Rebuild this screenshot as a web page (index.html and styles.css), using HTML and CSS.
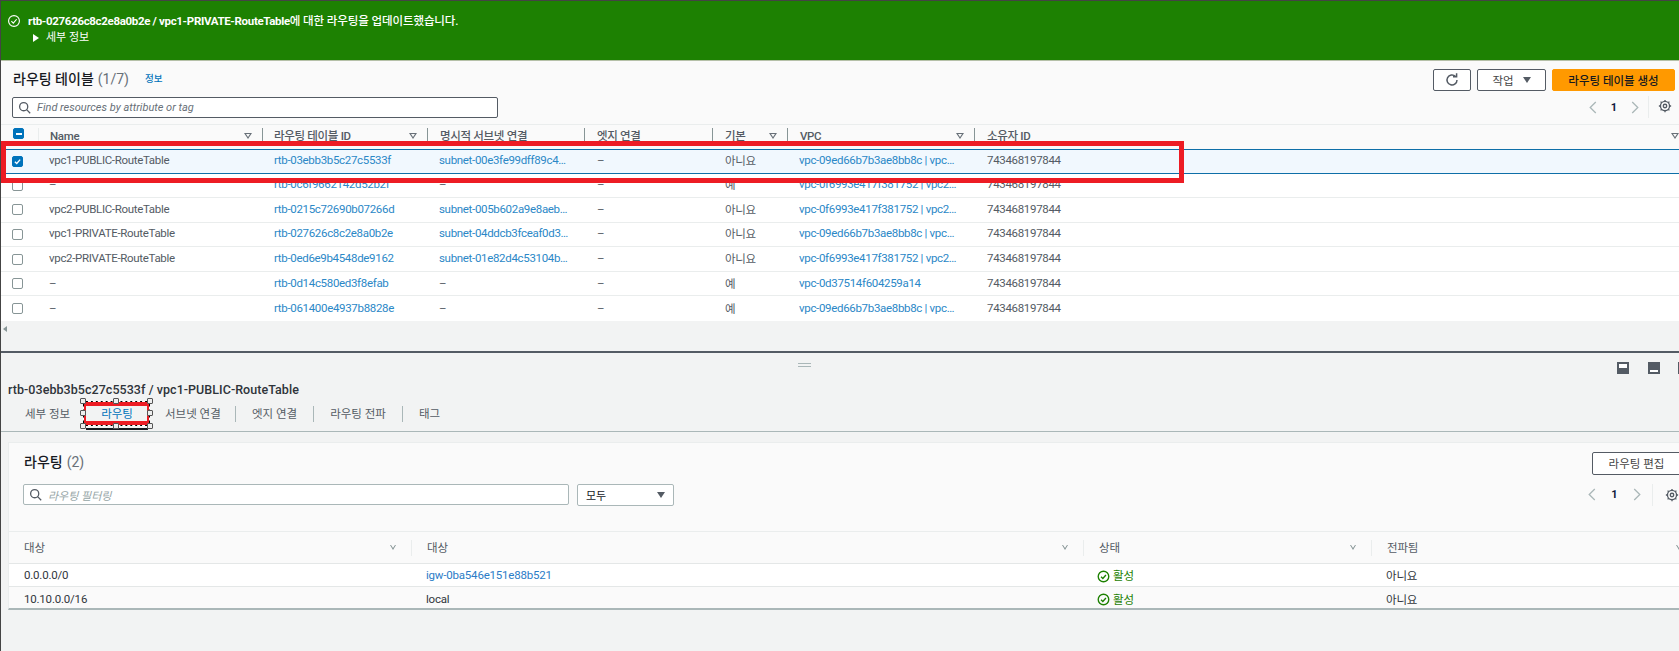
FILE: index.html
```html
<!DOCTYPE html>
<html lang="ko">
<head>
<meta charset="utf-8">
<title>라우팅 테이블</title>
<link rel="stylesheet" href="styles.css">
</head>
<body>
<div class="page">
  <div class="banner">
    <svg class="banner-ico" viewBox="0 0 16 16"><circle cx="8" cy="8" r="6.2"/><path d="M5 8.2l2.2 2.2L11 6"/></svg>
    <div>
      <div class="banner-msg"><b>rtb-027626c8c2e8a0b2e / vpc1-PRIVATE-RouteTable</b>에 대한 라우팅을 업데이트했습니다.</div>
      <div class="banner-more"><span class="tri"></span>세부 정보</div>
    </div>
  </div>

  <section class="top">
    <div class="top-head">
      <div class="title"><span>라우팅 테이블</span> <span class="count">(1/7)</span><a class="info">정보</a></div>
      <div class="actions">
        <button class="btn btn-ico"><svg viewBox="0 0 16 16"><path d="M13 8a5 5 0 1 1-1.6-3.7"/><path d="M12.6 1.2v3.6H9"/></svg></button>
        <button class="btn btn-act">작업<span class="caret"></span></button>
        <button class="btn btn-primary">라우팅 테이블 생성</button>
      </div>
    </div>
    <div class="tools">
      <div class="search s1"><svg class="mag" viewBox="0 0 16 16"><circle cx="7" cy="7" r="5"/><path d="M10.6 10.6L15 15"/></svg><i>Find resources by attribute or tag</i></div>
      <div class="pager">
        <svg class="chev" viewBox="0 0 8 14"><path d="M7 1L1 7l6 6"/></svg><b>1</b><svg class="chev" viewBox="0 0 8 14"><path d="M1 1l6 6-6 6"/></svg><span class="vsep"></span>
        <svg class="gear" viewBox="0 0 16 16"><circle cx="8" cy="8" r="2"/><circle cx="8" cy="8" r="5.2"/><path d="M8 1v1.6M8 13.4V15M1 8h1.6M13.4 8H15M3 3l1.2 1.2M11.8 11.8L13 13M13 3l-1.2 1.2M4.2 11.8L3 13"/></svg>
      </div>
    </div>
    <div class="tbl">
      <div class="row head">
        <div class="c"><span class="cb minus"></span></div>
        <div class="c">Name<span class="sort"></span></div>
        <div class="c">라우팅 테이블 ID<span class="sort"></span></div>
        <div class="c">명시적 서브넷 연결</div>
        <div class="c">엣지 연결</div>
        <div class="c">기본<span class="sort"></span></div>
        <div class="c">VPC<span class="sort"></span></div>
        <div class="c">소유자 ID<span class="sort"></span></div>
      </div>
      <div class="row sel">
        <div class="c"><span class="cb on"><svg viewBox="0 0 12 12"><path d="M2.5 6.2l2.5 2.5 4.5-5.2"/></svg></span></div>
        <div class="c">vpc1-PUBLIC-RouteTable</div><div class="c link">rtb-03ebb3b5c27c5533f</div><div class="c link">subnet-00e3fe99dff89c4…</div><div class="c">–</div><div class="c">아니요</div><div class="c link">vpc-09ed66b7b3ae8bb8c | vpc…</div><div class="c">743468197844</div>
      </div>
      <div class="row">
        <div class="c"><span class="cb"></span></div>
        <div class="c">–</div><div class="c link">rtb-0c6f9662142d52b2f</div><div class="c">–</div><div class="c">–</div><div class="c">예</div><div class="c link">vpc-0f6993e417f381752 | vpc2…</div><div class="c">743468197844</div>
      </div>
      <div class="row">
        <div class="c"><span class="cb"></span></div>
        <div class="c">vpc2-PUBLIC-RouteTable</div><div class="c link">rtb-0215c72690b07266d</div><div class="c link">subnet-005b602a9e8aeb…</div><div class="c">–</div><div class="c">아니요</div><div class="c link">vpc-0f6993e417f381752 | vpc2…</div><div class="c">743468197844</div>
      </div>
      <div class="row">
        <div class="c"><span class="cb"></span></div>
        <div class="c">vpc1-PRIVATE-RouteTable</div><div class="c link">rtb-027626c8c2e8a0b2e</div><div class="c link">subnet-04ddcb3fceaf0d3…</div><div class="c">–</div><div class="c">아니요</div><div class="c link">vpc-09ed66b7b3ae8bb8c | vpc…</div><div class="c">743468197844</div>
      </div>
      <div class="row">
        <div class="c"><span class="cb"></span></div>
        <div class="c">vpc2-PRIVATE-RouteTable</div><div class="c link">rtb-0ed6e9b4548de9162</div><div class="c link">subnet-01e82d4c53104b…</div><div class="c">–</div><div class="c">아니요</div><div class="c link">vpc-0f6993e417f381752 | vpc2…</div><div class="c">743468197844</div>
      </div>
      <div class="row">
        <div class="c"><span class="cb"></span></div>
        <div class="c">–</div><div class="c link">rtb-0d14c580ed3f8efab</div><div class="c">–</div><div class="c">–</div><div class="c">예</div><div class="c link">vpc-0d37514f604259a14</div><div class="c">743468197844</div>
      </div>
      <div class="row last">
        <div class="c"><span class="cb"></span></div>
        <div class="c">–</div><div class="c link">rtb-061400e4937b8828e</div><div class="c">–</div><div class="c">–</div><div class="c">예</div><div class="c link">vpc-09ed66b7b3ae8bb8c | vpc…</div><div class="c">743468197844</div>
      </div>
    </div>
    <div class="hscroll"><span class="left-tri"></span></div>
  </section>

  <section class="bottom">
    <div class="handle"></div>
    <div class="dock"><span class="d d1"></span><span class="d d2"></span><span class="d d3"></span></div>
    <h2 class="detail">rtb-03ebb3b5c27c5533f / vpc1-PUBLIC-RouteTable</h2>
    <div class="tabs">
      <span class="tab t1">세부 정보</span>
      <span class="tab t2 active">라우팅</span>
      <span class="tab t3">서브넷 연결</span>
      <span class="tab t4">엣지 연결</span>
      <span class="tab t5">라우팅 전파</span>
      <span class="tab t6">태그</span>
    </div>
    <div class="card">
      <div class="card-head">
        <div class="title t-sm">라우팅 <span class="count">(2)</span></div>
        <button class="btn btn-edit">라우팅 편집</button>
      </div>
      <div class="tools tools2">
        <div class="search s2"><svg class="mag" viewBox="0 0 16 16"><circle cx="7" cy="7" r="5"/><path d="M10.6 10.6L15 15"/></svg><i>라우팅 필터링</i></div>
        <div class="select">모두<span class="caret"></span></div>
        <div class="pager p2">
          <svg class="chev" viewBox="0 0 8 14"><path d="M7 1L1 7l6 6"/></svg><b>1</b><svg class="chev" viewBox="0 0 8 14"><path d="M1 1l6 6-6 6"/></svg><span class="vsep"></span>
          <svg class="gear" viewBox="0 0 16 16"><circle cx="8" cy="8" r="2"/><circle cx="8" cy="8" r="5.2"/><path d="M8 1v1.6M8 13.4V15M1 8h1.6M13.4 8H15M3 3l1.2 1.2M11.8 11.8L13 13M13 3l-1.2 1.2M4.2 11.8L3 13"/></svg>
        </div>
      </div>
      <div class="rt">
        <div class="rrow rhead">
          <div class="r">대상<span class="sort"></span></div>
          <div class="r">대상<span class="sort"></span></div>
          <div class="r">상태<span class="sort"></span></div>
          <div class="r">전파됨<span class="sort"></span></div>
        </div>
        <div class="rrow white">
          <div class="r">0.0.0.0/0</div>
          <div class="r link2">igw-0ba546e151e88b521</div>
          <div class="r ok"><svg viewBox="0 0 16 16"><circle cx="8" cy="8" r="6.5"/><path d="M5 8.2l2.2 2.2L11 6.2"/></svg>활성</div>
          <div class="r">아니요</div>
        </div>
        <div class="rrow rlast">
          <div class="r">10.10.0.0/16</div>
          <div class="r">local</div>
          <div class="r ok"><svg viewBox="0 0 16 16"><circle cx="8" cy="8" r="6.5"/><path d="M5 8.2l2.2 2.2L11 6.2"/></svg>활성</div>
          <div class="r">아니요</div>
        </div>
      </div>
    </div>
  </section>

  <div class="mark-row"></div>
  <div class="mark-tab"><span class="h h1"></span><span class="h h2"></span><span class="h h3"></span><span class="h h4"></span><span class="h h5"></span><span class="h h6"></span><span class="h h7"></span><span class="h h8"></span></div>
</div>
</body>
</html>
```
FILE: styles.css
```css
* { box-sizing: border-box; }
html, body { margin: 0; height: 100%; overflow: hidden; }
body { font-family: Roboto, "Noto Sans CJK KR", sans-serif; font-size: 12px; color: #444; background: #f2f3f3; }
.page { position: relative; width: 1679px; height: 651px; overflow: hidden; border-top: 1px solid #444; border-left: 1px solid #444; }

.banner { height: 60px; background: #1d8102; color: #fff; display: flex; gap: 7px; padding: 13px 0 0 6px; border-bottom: 1px solid #b5c0a8; }
.banner-ico { width: 14px; height: 14px; fill: none; stroke: #fff; stroke-width: 1.3; }
.banner-msg { font-size: 11.5px; line-height: 14px; font-weight: 500; letter-spacing: -.1px; }
.banner-msg b { font-weight: 700; letter-spacing: -.33px; }
.banner-more { font-size: 11px; line-height: 14px; margin: 3px 0 0 5px; display: flex; align-items: center; gap: 7px; }
.tri { width: 0; height: 0; border-left: 6px solid #fff; border-top: 4px solid transparent; border-bottom: 4px solid transparent; }

.top { background: #fafafa; }
.top-head { display: flex; justify-content: space-between; height: 34px; padding: 8px 4px 0 12px; }
.title { font-size: 14px; line-height: 22px; color: #16191f; font-weight: 500; display: flex; gap: 4px; align-items: center; height: 20px; }
.count { color: #687078; font-weight: 400; }
.info { font-size: 9.5px; color: #0073bb; margin-left: 12px; }
.actions { display: flex; gap: 6px; }
.btn { font: inherit; font-size: 11.5px; color: #444; background: #fff; border: 1px solid #545b64; border-radius: 2px; height: 22px; padding: 0; display: flex; align-items: center; justify-content: center; }
.btn-ico { width: 38px; }
.btn-ico svg { width: 16px; height: 16px; fill: none; stroke: #545b64; stroke-width: 1.5; }
.btn-act { width: 69px; gap: 9px; }
.caret { width: 0; height: 0; border-top: 6px solid #545b64; border-left: 4.5px solid transparent; border-right: 4.5px solid transparent; }
.btn-primary { width: 123px; background: #ff9900; border-color: #ff9900; color: #16191f; font-weight: 500; }

.tools { display: flex; justify-content: space-between; align-items: center; height: 29px; padding: 0 0 5px 11px; }
.search { display: flex; align-items: center; background: #fff; border: 1px solid #545b64; border-radius: 2px; height: 21px; padding-left: 5px; gap: 6px; color: #687078; font-size: 11px; }
.s1 { width: 486px; }
.mag { width: 13px; height: 13px; fill: none; stroke: #545b64; stroke-width: 1.6; flex: none; }
.pager { display: flex; align-items: center; width: 90px; flex: none; color: #16191f; }
.pager b { font-size: 11px; width: 34px; text-align: center; color: #0f1b3d; flex: none; }
.chev { width: 8px; height: 13px; fill: none; stroke: #aab7b8; stroke-width: 1.4; flex: none; }
.vsep { width: 1px; height: 22px; background: #eaeded; margin: 0 9px; flex: none; }
.gear { width: 14px; height: 14px; fill: none; stroke: #545b64; stroke-width: 1.5; flex: none; margin-top: -2px; }

.tbl { border-top: 1px solid #eaeded; background: #fff; }
.row { display: grid; grid-template-columns: 37px 224px 165px 157px 128px 75px 187px 1fr; height: 24.57px; align-items: center; border-bottom: 1px solid #eaeded; font-size: 11.5px; color: #545b64; letter-spacing: -.32px; }
.row.last { border-bottom: 0; }
.c { padding-left: 13px; white-space: nowrap; position: relative; }
.row .c:not(:first-child) { margin-bottom: 2px; }
.row .c:first-child { padding-left: 11px; }
.row .c:nth-child(3), .row .c:nth-child(4), .row .c:nth-child(7) { padding-left: 12px; }
.row .c:nth-child(2) { padding-left: 11px; }
.row.head { height: 24px; background: #fafafa; font-weight: 500; border-bottom: 0; }
.row.head .c { height: 16px; line-height: 16px; margin-bottom: 2px; border-left: 1px solid #879596; padding-left: 12px; }
.row.head .c:first-child { border-left: 0; }
.row.head .c:nth-child(2) { border-left-color: #eaeded; padding-left: 11px; }
.row.head .c:nth-child(3) { padding-left: 11px; }
.sort { position: absolute; right: 10px; top: 5px; width: 0; height: 0; border-top: 6px solid #687078; border-left: 4px solid transparent; border-right: 4px solid transparent; }
.sort::after { content: ""; position: absolute; left: -2px; top: -5px; width: 0; height: 0; border-top: 3px solid #fafafa; border-left: 2px solid transparent; border-right: 2px solid transparent; }
.head .c:last-child .sort { right: 0; }
.cb { display: block; width: 11px; height: 11px; border: 1px solid #879596; border-radius: 2px; background: #fff; }
.cb.on, .cb.minus { background: #0073bb; border-color: #0073bb; position: relative; }
.cb.on svg { display: block; width: 9px; height: 9px; fill: none; stroke: #fff; stroke-width: 1.8; }
.cb.minus::after { content: ""; position: absolute; left: 1.5px; right: 1.5px; top: 3.5px; height: 2px; background: #fff; }
.row.sel { background: #f1f8fe; border-top: 1px solid #0e6fa8; border-bottom: 1px solid #0e6fa8; }
.link { color: #2b88c7; }
.hscroll { height: 30px; background: #f2f3f3; padding: 5px 0 0 2px; }
.left-tri { display: block; width: 0; height: 0; border-right: 4px solid #879596; border-top: 3.5px solid transparent; border-bottom: 3.5px solid transparent; }

.bottom { position: relative; border-top: 2px solid #545b64; background: #f2f3f3; height: 300px; }
.handle { position: absolute; left: 797px; top: 10px; width: 13px; height: 4px; border-top: 1px solid #aab7b8; border-bottom: 1px solid #aab7b8; }
.dock { position: absolute; left: 1616px; top: 9px; display: flex; gap: 19px; }
.d { width: 12px; height: 12px; border: 2px solid #545b64; background: #fff; position: relative; flex: none; }
.d::after { content: ""; position: absolute; left: 0; right: 0; height: 4px; background: #545b64; }
.d1::after { bottom: 0; }
.d2::after { top: 0; height: 6px; }
.d3 { margin-left: -1px; }
.d3::after { left: auto; width: 4px; top: 0; bottom: 0; height: auto; right: 0; }
.detail { margin: 0; padding: 30px 0 0 7px; font-size: 12.5px; line-height: 14px; font-weight: 500; color: #2f343a; height: 51px; letter-spacing: .05px; }
.tabs { height: 28px; display: flex; align-items: flex-start; padding-top: 2px; border-bottom: 1px solid #aab7b8; font-size: 11.5px; color: #545b64; position: relative; }
.tab { display: block; height: 16px; line-height: 16px; border-left: 1px solid #aab7b8; white-space: nowrap; flex: none; }
.t1, .t2, .t3 { border-left: 0; }
.t1 { padding-left: 24px; width: 85px; }
.t2 { color: #0073bb; width: 62px; text-align: center; }
.t3 { padding-left: 17px; width: 87px; }
.t4, .t5, .t6 { padding: 0 16px; }
.active::after { content: ""; position: absolute; left: 85px; width: 62px; bottom: 1px; height: 2px; background: #16191f; }

.card { margin: 10px 0 0 7px; width: 1680px; height: 168px; background: #fafafa; border-top: 1px solid #eaeded; border-left: 1px solid #eaeded; border-bottom: 2px solid #aab7b8; }
.card-head { position: relative; height: 41px; padding: 9px 0 0 15px; }
.t-sm { font-size: 14px; }
.btn-edit { position: absolute; left: 1583px; top: 9px; width: 89px; height: 23px; }
.tools2 { justify-content: flex-start; height: 22px; padding: 0 0 0 14px; gap: 8px; }
.s2 { width: 547px; height: 21px; border-color: #aab7b8; color: #95a5a6; font-size: 11px; }
.select { width: 97px; height: 22px; background: #fff; border: 1px solid #aab7b8; border-radius: 2px; padding: 0 8px; font-size: 11px; color: #16191f; display: flex; justify-content: space-between; align-items: center; flex: none; }
.p2 { margin-left: 906px; width: 100px; }
.p2 b { width: 37px; }
.p2 .vsep { margin: 0 12px 0 11px; }
.p2 .gear { margin-top: 0; }
.rt { margin-top: 25px; border-top: 1px solid #eaeded; }
.rrow { display: grid; grid-template-columns: 402px 672px 288px 1fr; height: 23px; align-items: center; border-bottom: 1px solid #e4e7e7; font-size: 11.5px; color: #31363c; }
.rlast { border-bottom: 0; height: 21px; padding-top: 3px; }
.rhead { height: 32px; color: #545b64; }
.white { background: #fff; padding-top: 1px; }
.r { padding-left: 15px; white-space: nowrap; position: relative; letter-spacing: -.2px; }
.rhead .r { height: 16px; line-height: 16px; border-left: 1px solid #eaeded; margin-top: 1px; }
.rhead .r:first-child { border-left: 0; padding-left: 15px; }
.rhead .sort { border-top-color: #879596; top: 5px; right: 15px; border-top-width: 5px; border-left-width: 3.5px; border-right-width: 3.5px; }
.rhead .r:last-child .sort { right: 6px; }
.link2 { color: #2b7cc7; }
.rrow .ok { color: #1d8102; display: flex; align-items: center; gap: 3px; padding-left: 14px; }
.ok svg { width: 13px; height: 13px; fill: none; stroke: #1d8102; stroke-width: 1.7; flex: none; margin-top: 2px; }

.mark-row { position: absolute; left: 0; top: 140px; width: 1183px; height: 42px; border: 5px solid #ed1c24; }
.mark-tab { position: absolute; left: 82px; top: 400px; width: 67px; height: 25px; border-style: solid; border-color: #ed1c24; border-width: 5px 3px; }
.mark-tab::before, .mark-tab::after { content: ""; position: absolute; inset: -5px -3px; }
.mark-tab::before { border: 1px solid #000; }
.mark-tab::after { border: 1px dashed #fff; }
.h { position: absolute; width: 6px; height: 6px; background: #eee; border: 1px solid #555; border-radius: 1px; z-index: 1; }
.h1 { left: -6px; top: -8px; } .h2 { left: 27px; top: -8px; } .h3 { right: -6px; top: -8px; }
.h4 { left: -6px; top: 4px; } .h5 { right: -6px; top: 4px; }
.h6 { left: -6px; bottom: -8px; } .h7 { left: 27px; bottom: -8px; } .h8 { right: -6px; bottom: -8px; }
```
